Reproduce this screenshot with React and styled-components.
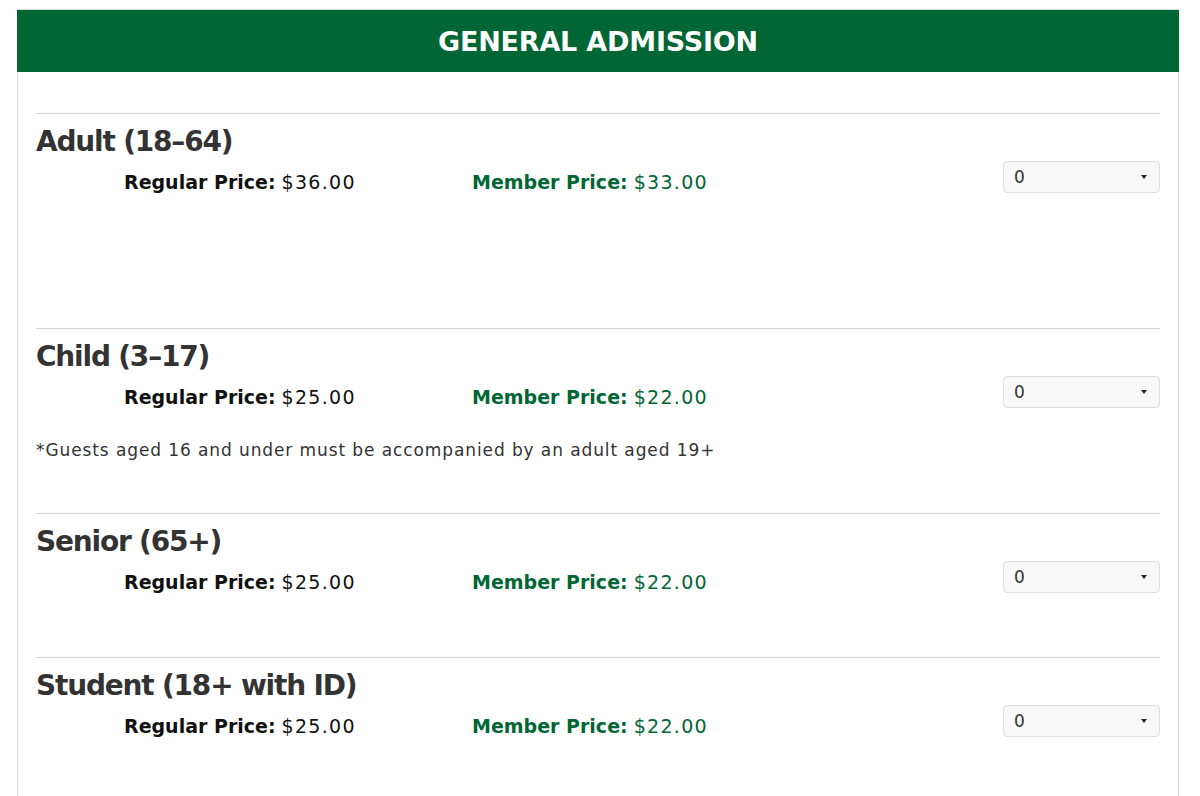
import React from "react";
import styled, { createGlobalStyle } from "styled-components";

const GlobalStyle = createGlobalStyle`
  body {
    margin: 0;
    background: #fff;
    font-family: "DejaVu Sans", "Open Sans", sans-serif;
    color: #333;
  }
`;

const GREEN = "#006633";

const tickets = [
  { name: "Adult (18–64)", regular: "$36.00", member: "$33.00", pad: 134 },
  {
    name: "Child (3–17)",
    regular: "$25.00",
    member: "$22.00",
    note: "*Guests aged 16 and under must be accompanied by an adult aged 19+",
    pad: 51,
  },
  { name: "Senior (65+)", regular: "$25.00", member: "$22.00", pad: 63 },
  { name: "Student (18+ with ID)", regular: "$25.00", member: "$22.00", pad: 63 },
];

export default function App() {
  return (
    <Page>
      <GlobalStyle />
      <Card>
        <Header>GENERAL ADMISSION</Header>
        <Body>
          {tickets.map((t) => (
            <Section key={t.name} $pad={t.pad}>
              <Title>{t.name}</Title>
              <Row>
                <Prices>
                  <Price>
                    <b>Regular Price:</b> <Value>{t.regular}</Value>
                  </Price>
                  <Price $member>
                    <b>Member Price:</b> <Value>{t.member}</Value>
                  </Price>
                </Prices>
                <Select>
                  <span>0</span>
                  <Caret />
                </Select>
              </Row>
              {t.note && <Note>{t.note}</Note>}
            </Section>
          ))}
        </Body>
      </Card>
    </Page>
  );
}

const Page = styled.div`
  padding: 9px 21px 0 17px;
`;

const Card = styled.div`
  border: 1px solid #dcdcdc;
  border-bottom: none;
  background: #fff;
`;

const Header = styled.h2`
  margin: 0 -1px;
  height: 62px;
  background: ${GREEN};
  color: #fff;
  display: flex;
  align-items: center;
  justify-content: center;
  font-family: "DejaVu Sans", sans-serif;
  font-weight: 700;
  font-size: 27px;
  letter-spacing: -0.2px;
`;

const Body = styled.div`
  padding: 41px 18px 0 18px;
`;

const Section = styled.div`
  border-top: 1px solid #d4d4d4;
  padding: 11px 0 ${(p) => p.$pad}px;
`;

const Title = styled.h3`
  margin: 0;
  font-family: "DejaVu Sans", sans-serif;
  font-weight: 700;
  font-size: 28px;
  letter-spacing: -1.2px;
  line-height: 34px;
  color: #333;
`;

const Row = styled.div`
  display: flex;
  align-items: flex-start;
  margin-top: 2px;
`;

const Prices = styled.div`
  flex: 1;
  display: flex;
  padding: 9px 0 0 88px;
`;

const Price = styled.div`
  width: ${(p) => (p.$member ? "auto" : "348px")};
  font-size: 19px;
  line-height: 24px;
  color: ${(p) => (p.$member ? GREEN : "#111")};
  b {
    font-weight: 700;
  }
`;

const Value = styled.span`
  letter-spacing: 1.3px;
`;

const Select = styled.div`
  width: 157px;
  height: 32px;
  box-sizing: border-box;
  border: 1px solid #dedede;
  border-radius: 4px;
  background: #f8f8f8;
  display: flex;
  align-items: center;
  justify-content: space-between;
  padding: 0 12px 0 10px;
  font-size: 17px;
  color: #333;
`;

const Caret = styled.span`
  width: 0;
  height: 0;
  border-left: 3.5px solid transparent;
  border-right: 3.5px solid transparent;
  border-top: 4px solid #222;
`;

const Note = styled.p`
  margin: 29px 0 0;
  font-size: 17px;
  letter-spacing: 0.9px;
  line-height: 24px;
  color: #333;
`;
